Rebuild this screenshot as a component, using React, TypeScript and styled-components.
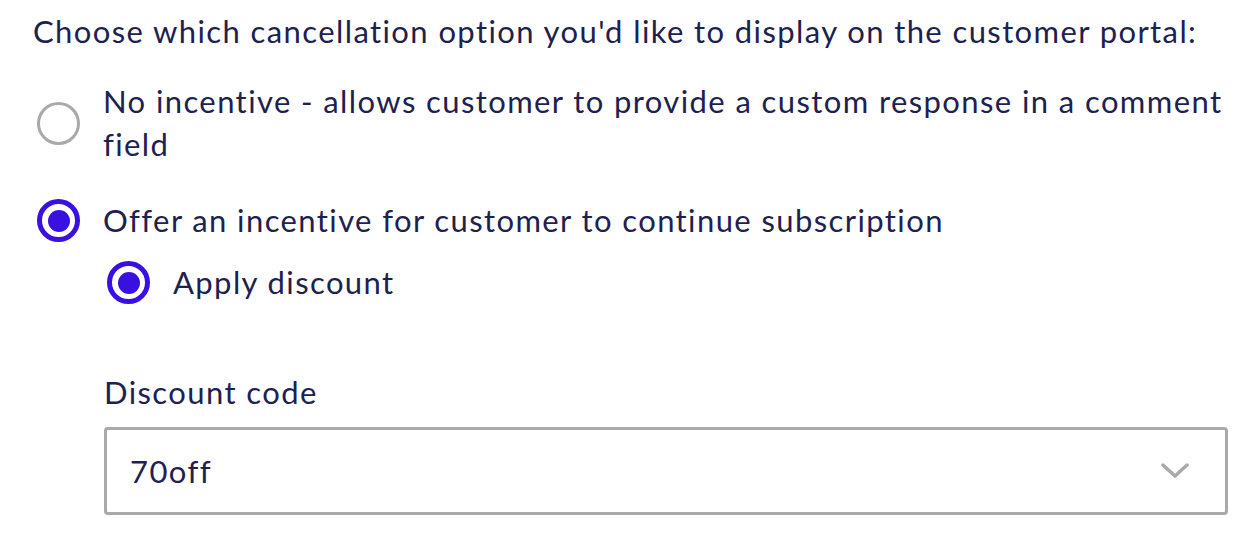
import React from "react";
import styled, { createGlobalStyle } from "styled-components";

const Global = createGlobalStyle`
  html, body { margin: 0; padding: 0; background: #ffffff; }
  body { font-family: "Lato", "Noto Sans", sans-serif; color: #1d2150; }
`;

const Page = styled.div`
  width: 1195px;
  padding: 0 0 0 33px;
  font-size: 31px;
  letter-spacing: 1.4px;
  line-height: 43px;
`;

const Heading = styled.p`
  margin: 0;
  padding-top: 10px;
`;

const Option = styled.label<{ $indent?: number; $top?: number }>`
  display: flex;
  align-items: center;
  gap: 23px;
  margin-left: ${(p) => p.$indent ?? 4}px;
  margin-top: ${(p) => p.$top ?? 0}px;
  cursor: pointer;
`;

const Circle = styled.span<{ $checked?: boolean }>`
  flex: none;
  box-sizing: border-box;
  width: 43px;
  height: 43px;
  border-radius: 50%;
  border: ${(p) => (p.$checked ? "5px solid #3a10e2" : "3px solid #a9a9a9")};
  display: flex;
  align-items: center;
  justify-content: center;
  &::after {
    content: "";
    display: ${(p) => (p.$checked ? "block" : "none")};
    width: 22px;
    height: 22px;
    border-radius: 50%;
    background: #3a10e2;
  }
`;

const OptionText = styled.span``;

const Options = styled.div`
  display: flex;
  flex-direction: column;
  margin-top: 27px;
`;

const Field = styled.div`
  margin-left: 71px;
  margin-top: 67px;
  display: flex;
  flex-direction: column;
  gap: 13px;
`;

const FieldLabel = styled.div``;

const Select = styled.div`
  box-sizing: border-box;
  height: 88px;
  border: 3px solid #a9a9a9;
  border-radius: 4px;
  display: flex;
  align-items: center;
  justify-content: space-between;
  padding: 0 36px 0 23px;
`;

const Chevron = () => (
  <svg width="28" height="16" viewBox="0 0 28 16" fill="none">
    <path d="M2 2 L14 13 L26 2" stroke="#a9a9a9" strokeWidth="3.5" strokeLinecap="round" strokeLinejoin="round" />
  </svg>
);

export default function App() {
  return (
    <>
      <Global />
      <Page>
        <Heading>Choose which cancellation option you'd like to display on the customer portal:</Heading>
        <Options>
          <Option>
            <Circle />
            <OptionText>No incentive - allows customer to provide a custom response in a comment field</OptionText>
          </Option>
          <Option $top={33}>
            <Circle $checked />
            <OptionText>Offer an incentive for customer to continue subscription</OptionText>
          </Option>
          <Option $indent={74} $top={19}>
            <Circle $checked />
            <OptionText>Apply discount</OptionText>
          </Option>
        </Options>
        <Field>
          <FieldLabel>Discount code</FieldLabel>
          <Select>
            <span>70off</span>
            <Chevron />
          </Select>
        </Field>
      </Page>
    </>
  );
}
